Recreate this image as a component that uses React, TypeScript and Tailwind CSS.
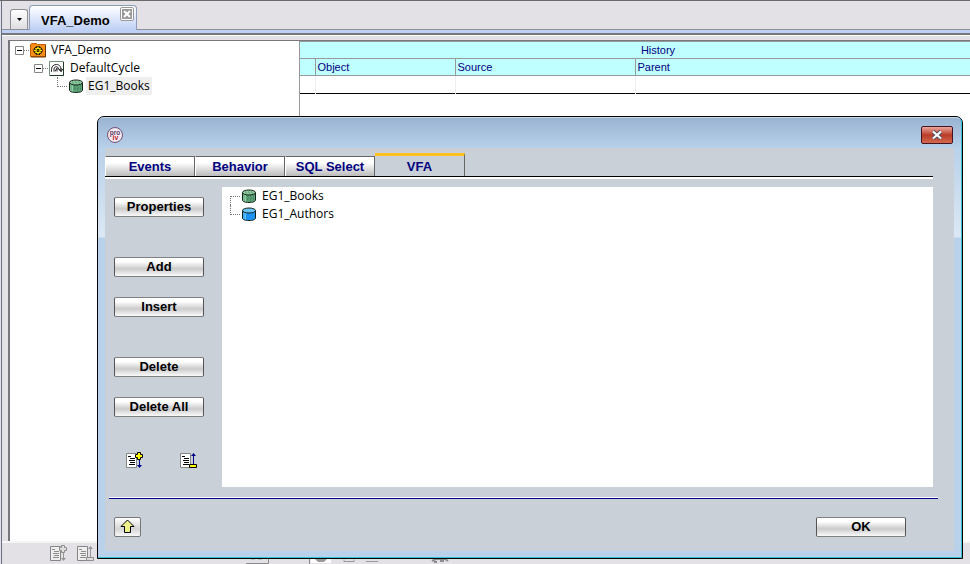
import React, { useState } from "react";

const BUTTON =
  "h-5 w-[90px] rounded-[2px] border border-[#808080] border-x-[#555] bg-gradient-to-b from-[#ffffff] from-20% via-[#cbcbcb] via-60% to-[#fafafa] text-center font-[Liberation_Sans,Arial,sans-serif] text-[13px] leading-[18px] font-bold text-black";

function DbIcon({ fill, top, hatch }: { fill: string; top: string; hatch?: boolean }) {
  return (
    <svg className="h-4 w-4 shrink-0" viewBox="0 0 16 16">
      <path d="M1.500 4.500v7.500c0 1.500 2.400 2.500 6.500 2.500s6.500-1 6.500-2.500V4.500" fill={fill} stroke="#13231b" />
      <path d="M3 6v7M4.500 6.500v7" stroke={top} strokeWidth="1" />
      {hatch && <path d="M6 8h1m2 0h1m2 0h1M6 11h1m2 0h1m2 0h1M7 10h1m2 0h1M9 13h1" stroke="#35754f" />}
      <ellipse cx="8" cy="4.500" rx="6.500" ry="2.500" fill={top} stroke="#13231b" />
      {hatch && <path d="M4 4h1m2 0h1m2 0h1M5 5h1m2 0h1m2 0h1" stroke="#4b9365" />}
    </svg>
  );
}

function FolderIcon() {
  return (
    <svg className="h-4 w-4 shrink-0" viewBox="0 0 16 16">
      <path d="M.5 2.500l1-1h5l1 1h8v12H.5z" fill="#f98d18" stroke="#c05d00" />
      <path d="M15.500 3v12H1" fill="none" stroke="#6b3600" />
      <path d="M8 4v9M3.500 8.500h9M5 5.500l6 6M11 5.500l-6 6" stroke="#000" strokeWidth="3" />
      <path d="M8 4.500v8M4 8.500h8M5.500 6l5 5M10.500 6l-5 5" stroke="#ffe600" strokeWidth="1.500" />
      <circle cx="8" cy="8.500" r="2.500" fill="#ffe600" />
      <path d="M7 7.500h2v2H7z" fill="#f98d18" stroke="#000" strokeWidth="0.800" />
    </svg>
  );
}

function CycleIcon() {
  return (
    <svg className="h-[15px] w-[15px] shrink-0" viewBox="0 0 15 15" fill="none">
      <path d="M.5.500h14v14H.5z" fill="#fff" stroke="#75907c" />
      <path d="M1 14.500h13.500V1" stroke="#20382a" />
      <path d="M3 10.500H2.500v-2C2.500 5 5 3.500 7.500 3.500S12 5 12 9M5 10.500V8c0-3 4.500-3 4.500 0L12 10.500V7M6 10.500L8 7v3.500M10 8l2 2.500L14 8" stroke="#222" />
    </svg>
  );
}

function ListIcon({ kind, faded }: { kind: "add" | "remove"; faded?: boolean }) {
  const ink = faded ? "#8d8d8d" : "#000";
  const arrow = faded ? "#969696" : "#000088";
  const mark = faded ? "#dedede" : "#ffff00";
  return (
    <svg className="h-[17px] w-[18px] shrink-0" viewBox="0 0 18 17" fill="none">
      <path d="M.5 1.500h10v14H.5z" fill={faded ? "#eee" : "#fff"} stroke="#858585" />
      <path d="M2 4.500h3M4 6.500h5M3 8.500h6M4 10.500h5M3 12.500h6" stroke={ink} />
      {kind === "add" ? (
        <>
          <path d="M13.500 7v8" stroke={arrow} />
          <path d="M11 13h5l-2.500 3z" fill={arrow} />
          <path d="M11.500.500h3v2h2v3h-2v2h-3v-2h-2v-3h2z" fill={mark} stroke={ink} />
        </>
      ) : (
        <>
          <path d="M13.500 3v9" stroke={arrow} />
          <path d="M11 4h5l-2.500-3z" fill={arrow} />
          <path d="M9.500 12.500h7v3h-7z" fill={mark} stroke={ink} />
        </>
      )}
    </svg>
  );
}

function Toggle() {
  return (
    <svg className="h-[9px] w-[9px] shrink-0" viewBox="0 0 9 9">
      <path d="M.5.500h8v8h-8z" fill="#fff" stroke="#848484" />
      <path d="M2 4.500h5" stroke="#000" />
    </svg>
  );
}

function MainTree() {
  return (
    <ul className="flex flex-col font-[Open_Sans,Noto_Sans,sans-serif] text-[12px] leading-[18px] text-black">
      <li className="flex h-[18px] items-center pl-[5px]">
        <Toggle />
        <i className="w-[5px] border-t border-dotted border-[#777]" />
        <span className="ml-px flex items-center"><FolderIcon /><span className="pl-[5px]">VFA_Demo</span></span>
      </li>
      <li className="flex h-[18px] items-center pl-6">
        <Toggle />
        <i className="w-[5px] border-t border-dotted border-[#777]" />
        <span className="ml-px flex items-center"><CycleIcon /><span className="pl-[6px]">DefaultCycle</span></span>
      </li>
      <li className="flex h-[18px] items-center pl-[47px]">
        <i className="h-[10px] w-[10px] self-start border-b border-l border-dotted border-[#777]" />
        <span className="ml-px flex items-center"><DbIcon fill="#5ca276" top="#93cba2" hatch /><span className="ml-[2px] bg-[#efefef] px-[2px]">EG1_Books</span></span>
      </li>
    </ul>
  );
}

function HistoryTable() {
  return (
    <table className="w-full table-fixed border-collapse font-[Liberation_Sans,Arial,sans-serif] text-[11px] leading-[15px] text-[#00007f]">
      <colgroup>
        <col className="w-[15px]" />
        <col className="w-[140px]" />
        <col className="w-[180px]" />
        <col />
      </colgroup>
      <thead className="bg-[#c0ffff]">
        <tr className="h-[17px] border-y border-[#999]">
          <th colSpan={4} className="p-0 pt-px pl-[46px] text-center font-normal">History</th>
        </tr>
        <tr className="h-[17px] border-b border-[#999]">
          <th className="border-r border-[#999] p-0"></th>
          <th className="border-r border-[#999] p-0 pt-px pl-[2px] text-left font-normal">Object</th>
          <th className="border-r border-[#999] p-0 pt-px pl-[2px] text-left font-normal">Source</th>
          <th className="p-0 pt-px pl-[2px] text-left font-normal">Parent</th>
        </tr>
      </thead>
      <tbody>
        <tr className="h-[18px] border-b border-black">
          <td className="border-r border-[#eee] p-0"></td>
          <td className="border-r border-[#eee] p-0"></td>
          <td className="border-r border-[#eee] p-0"></td>
          <td className="p-0"></td>
        </tr>
      </tbody>
    </table>
  );
}

function Dialog() {
  const [tab, setTab] = useState("VFA");
  return (
    <section
      role="dialog"
      aria-label="Cycle properties"
      className="absolute top-[115px] right-[7px] bottom-[5px] left-[97px] flex flex-col rounded-t-[7px] border border-black bg-[#b9d1ea] bg-[linear-gradient(#98b3d2,#b9d1ea_32px,#dce8f4_120px,#b9d1ea_121px)] font-[Liberation_Sans,Arial,sans-serif] text-[13px] font-bold"
    >
      <div className="flex min-h-0 flex-1 flex-col rounded-t-[6px] border-t border-r border-b border-t-white/50 border-r-[#36c2d5] border-b-[#36c2d5] px-[7px] pb-[6px]">
        <header className="flex h-[30px] shrink-0 items-center justify-between pr-px pl-[2px]">
          <svg className="mt-1 h-4 w-4" viewBox="0 0 16 16">
            <circle cx="8" cy="8" r="7.500" fill="#f5e9f0" stroke="#715078" />
            <text x="8" y="7.500" textAnchor="middle" fontSize="6.500" fontWeight="bold" fill="#5c3f67">pro</text>
            <text x="8.500" y="13" textAnchor="middle" fontSize="7" fontWeight="bold" fill="#c22536">iv</text>
          </svg>
          <button aria-label="Close" className="mt-1 flex h-[18px] w-8 items-center justify-center rounded-[2px] border border-[#431422] bg-gradient-to-b from-[#eba69c] via-[#b93b27] via-50% to-[#d4694f]">
            <svg className="h-[10px] w-3" viewBox="0 0 12 10">
              <path d="M2 1.500l8 7M10 1.500l-8 7" stroke="#4a5065" strokeWidth="4" />
              <path d="M2 1.500l8 7M10 1.500l-8 7" stroke="#fff" strokeWidth="2.200" />
            </svg>
          </button>
        </header>
        <div className="flex min-h-0 flex-1 flex-col bg-[#c9d0d8] pt-[6px]">
          <nav role="tablist" className="mr-[21px] flex h-[25px] shrink-0 items-end border-b-2 border-white">
            <div className="flex h-full w-full items-end border-b border-black">
              {["Events", "Behavior", "SQL Select", "VFA"].map((name) =>
                name === tab ? (
                  <button key={name} role="tab" aria-selected="true" onClick={() => setTab(name)} className="h-[23px] w-[90px] border-t-[3px] border-r border-t-[#ffc020] border-r-[#666] bg-[#c9d0d8] leading-[21px] text-[#00007f]">{name}</button>
                ) : (
                  <button key={name} role="tab" aria-selected="false" onClick={() => setTab(name)} className="h-5 w-[90px] border-t border-r border-l border-t-[#666] border-r-[#666] border-l-white bg-gradient-to-b from-white from-30% to-[#bbb] leading-[20px] text-[#00007f]">{name}</button>
                ),
              )}
            </div>
          </nav>
          <div className="mt-2 mr-[21px] flex min-h-0 flex-1 pl-[9px]">
            <div className="flex w-[108px] shrink-0 flex-col items-start pt-[10px]">
              <button className={BUTTON}>Properties</button>
              <button className={`${BUTTON} mt-10`}>Add</button>
              <button className={`${BUTTON} mt-5`}>Insert</button>
              <button className={`${BUTTON} mt-10`}>Delete</button>
              <button className={`${BUTTON} mt-5`}>Delete All</button>
              <div className="mt-[35px] flex gap-9 pl-3">
                <button aria-label="Expand list"><ListIcon kind="add" /></button>
                <button aria-label="Collapse list"><ListIcon kind="remove" /></button>
              </div>
            </div>
            <ul className="flex flex-1 flex-col bg-white pl-2 font-[Open_Sans,Noto_Sans,sans-serif] text-[12px] leading-[18px] font-normal text-black">
              <li className="flex h-[18px] items-center gap-px">
                <i className="h-[9px] w-[10px] self-end border-t border-l border-dotted border-[#777]" />
                <DbIcon fill="#5ca276" top="#93cba2" hatch />
                <span className="pl-1">EG1_Books</span>
              </li>
              <li className="flex h-[18px] items-center gap-px">
                <i className="h-[10px] w-[10px] self-start border-b border-l border-dotted border-[#777]" />
                <DbIcon fill="#1e92f3" top="#69c5ff" />
                <span className="pl-1">EG1_Authors</span>
              </li>
            </ul>
          </div>
          <div className="mt-[10px] mr-4 ml-1 shrink-0 border-t border-b border-t-white border-b-[#00008b]" />
          <footer className="mr-12 ml-[9px] flex h-[52px] shrink-0 items-center justify-between pt-[3px]">
            <button aria-label="Up" className="flex h-5 w-[27px] items-center justify-center rounded-[2px] border border-[#777] bg-gradient-to-b from-white via-[#d5d5d5] via-60% to-[#f8f8f8]">
              <svg className="h-[15px] w-[15px]" viewBox="0 0 15 15">
                <path d="M7.500 1l6.500 6.500h-3.500v6h-6v-6H1z" fill="#eef08a" stroke="#000" />
              </svg>
            </button>
            <button className={BUTTON}>OK</button>
          </footer>
        </div>
      </div>
    </section>
  );
}

export default function App() {
  return (
    <main className="relative flex h-screen min-h-[500px] flex-col overflow-hidden border-t border-[#6a6a6a] bg-[#e3e1e6] pl-px">
      <div className="flex min-h-0 flex-1 flex-col border-l border-[#667087]">
        <nav className="flex h-[29px] shrink-0 items-end border-b border-[#8e8e96] pl-2">
          <button aria-label="Tab list" className="flex h-5 w-[18px] items-center justify-center rounded-t-[3px] border border-b-0 border-[#8e8e96] bg-gradient-to-b from-white to-[#dedee2]">
            <svg className="h-[3px] w-[5px]" viewBox="0 0 5 3"><path d="M0 0h5L2.500 3z" /></svg>
          </button>
          <div className="-mb-px ml-px flex h-[25px] w-[108px] items-start justify-between rounded-t-[4px] border border-b-0 border-[#8e9cb8] bg-gradient-to-b from-white to-[#bed0f5] pr-[2px] pl-[11px]">
            <span className="pt-[7px] font-[Liberation_Sans,Arial,sans-serif] text-[13px] leading-4 font-bold">VFA_Demo</span>
            <button aria-label="Close tab" className="mt-px flex h-[14px] w-[14px] items-center justify-center rounded-[2px] border border-[#999] bg-white p-px">
              <svg className="h-[10px] w-[10px]" viewBox="0 0 10 10">
                <path d="M0 0h10v10H0z" fill="#999" />
                <path d="M2 2l6 6M8 2L2 8" stroke="#fff" strokeWidth="2" />
              </svg>
            </button>
          </div>
        </nav>
        <div className="h-[5px] shrink-0 border-b-2 border-[#77777c] bg-[#bed0f5]" />
        <div className="h-px shrink-0 bg-white" />
        <div className="mt-1 ml-[6px] flex min-h-0 flex-1 border-t border-l-2 border-[#77777c] bg-white">
          <aside className="w-[290px] shrink-0 border-r border-[#999]">
            <MainTree />
          </aside>
          <div className="min-w-0 flex-1">
            <HistoryTable />
          </div>
        </div>
        <footer className="flex h-[23px] shrink-0 items-center gap-[9px] border-t-2 border-[#f6f6f6] pl-12">
          <button aria-label="Expand rows"><ListIcon kind="add" faded /></button>
          <button aria-label="Collapse rows"><ListIcon kind="remove" faded /></button>
          <svg className="ml-[142px] h-[5px] w-[210px] self-end" viewBox="0 0 210 5" fill="none">
            <path d="M0 4.500h22.500V0M63.500 0v5" stroke="#8d8d8d" />
            <path d="M5 0h4M12 0h4M98 .500v2h10v-2M120 2.500h12" stroke="#999" />
            <path d="M65 0h20v4H65z" fill="#fff" />
            <path d="M69 0h12l-3 3h-6z" fill="#999" />
            <path d="M186 2l4-2h9l3 2M188 3h3M194 2h4" stroke="#8d8d8d" strokeWidth="2" />
          </svg>
        </footer>
      </div>
      <Dialog />
    </main>
  );
}
